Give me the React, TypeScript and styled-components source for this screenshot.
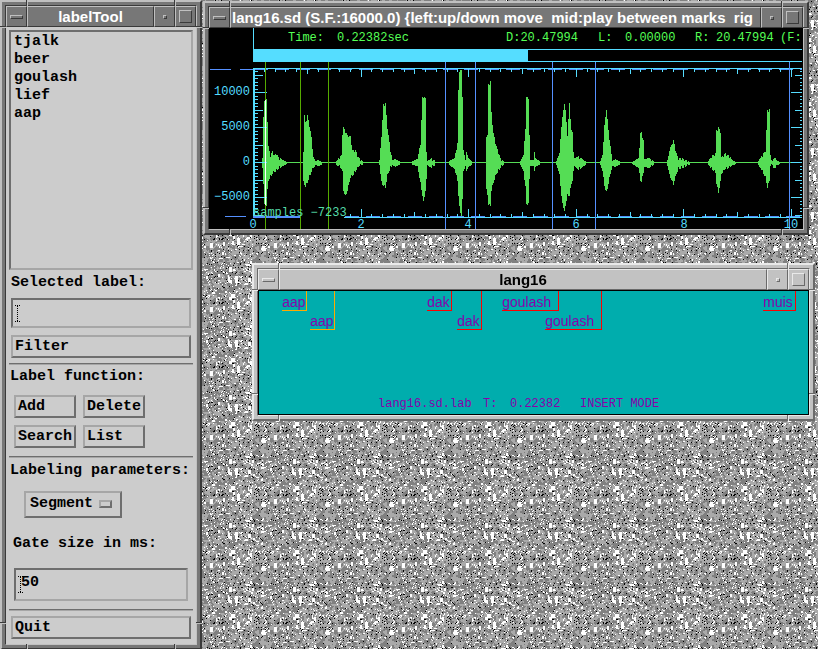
import React from "react";
import styled, { createGlobalStyle, css, ThemeProvider } from "styled-components";

const GlobalStyle = createGlobalStyle`
  *, *::before, *::after { box-sizing: border-box; }
  body { margin: 0; background: #999; overflow: hidden; }
  ul, p, h1, h2 { margin: 0; padding: 0; font: inherit; }
`;

const SANS = '"Liberation Sans", Arial, sans-serif';
const MONO = '"Liberation Mono", "Courier New", monospace';

const darkFrame = { face: "#777777", light: "#c0c0c0", dark: "#3a3a3a", title: "#ffffff" };
const lightFrame = { face: "#c2c2c2", light: "#e9e9e9", dark: "#6a6a6a", title: "#000000" };

const raised = css`
  border-style: solid;
  border-color: #a6a6a6 #6e6e6e #6e6e6e #a6a6a6;
`;
const sunken = css`
  border-style: solid;
  border-color: #6e6e6e #a6a6a6 #a6a6a6 #6e6e6e;
`;

/* ---------- desktop ---------- */

const TILE = 64;

const WHITE_BLOBS: number[][] = [
  [37, 11, 3, 5], [41, 13, 2, 2], [43, 20, 3, 7], [36, 21, 2, 5], [38, 24, 2, 3],
  [56, 22, 3, 4], [53, 27, 3, 2], [39, 38, 4, 4], [37, 41, 3, 3], [45, 46, 3, 7],
  [41, 44, 2, 3], [6, 54, 3, 5], [18, 51, 3, 5], [31, 50, 2, 4], [5, 19, 3, 2],
  [26, 18, 2, 3], [14, 20, 2, 3], [20, 36, 3, 2], [58, 41, 2, 4], [55, 45, 3, 2],
  [50, 52, 3, 1], [46, 54, 4, 1], [27, 2, 4, 1], [34, 1, 4, 1], [54, 8, 4, 2],
  [58, 5, 2, 3], [33, 35, 2, 2], [1, 15, 3, 1], [60, 12, 2, 3], [30, 60, 2, 3],
];

function buildGranite() {
  let seed = 90210;
  const rnd = () => {
    seed = (seed + 0x6d2b79f5) | 0;
    let t = Math.imul(seed ^ (seed >>> 15), 1 | seed);
    t = (t + Math.imul(t ^ (t >>> 7), 61 | t)) ^ t;
    return ((t ^ (t >>> 14)) >>> 0) / 4294967296;
  };
  const layer = () => {
    const cells = Array.from({ length: TILE * TILE }, rnd);
    return (x: number, y: number) => cells[((y + TILE) % TILE) * TILE + ((x + TILE) % TILE)];
  };
  const shade = layer();
  const fleck = layer();
  let grey = "";
  let white = "";
  let black = "";
  for (let y = 0; y < TILE; y++) {
    for (let x = 0; x < TILE; x++) {
      const cell = `M${x} ${y}h1v1h-1z`;
      let sum = 0;
      for (let dy = -1; dy <= 1; dy++) for (let dx = -1; dx <= 1; dx++) sum += shade(x + dx, y + dy);
      if (sum / 9 + (shade(x, y) - 0.5) * 0.15 > 0.5) grey += cell;
      const clump =
        fleck(x, y) * 3 + fleck(x - 1, y) * 2 + fleck(x, y - 1) * 2 + fleck(x + 1, y + 1);
      if (clump > 5.7) white += cell;
      else if (rnd() < 0.045) black += cell;
    }
  }
  WHITE_BLOBS.forEach(([x, y, w, h]) => {
    white += `M${x} ${y}h${w}v${h}h${-w}z`;
  });
  return { grey, white, black };
}

const granite = buildGranite();

const Backdrop = styled.svg`
  position: fixed;
  inset: 0;
  width: 100%;
  height: 100%;
  z-index: -1;
`;

const Desktop = styled.main`
  display: grid;
  grid-template-columns: 202px minmax(0, 1fr);
  align-items: start;
  column-gap: 1px;
  height: 100vh;
  overflow: hidden;
`;

const RightSide = styled.div`
  display: flex;
  flex-direction: column;
  gap: 28px;
  padding-top: 1px;
`;

/* ---------- window frame ---------- */

const Frame = styled.section<{ $margin?: string }>`
  position: relative;
  margin: ${(p) => p.$margin ?? "0"};
  padding: 3px;
  background: ${(p) => p.theme.face};
  border: 2px solid;
  border-color: ${({ theme: t }) => `${t.light} ${t.dark} ${t.dark} ${t.light}`};
`;

const FrameInner = styled.div`
  border: 1px solid;
  border-color: ${({ theme: t }) => `${t.dark} ${t.light} ${t.light} ${t.dark}`};
`;

const Notch = styled.i<{ $side: "top" | "bottom" | "left" | "right"; $end?: boolean }>`
  position: absolute;
  background: ${(p) => p.theme.light};
  ${({ $side, $end, theme }) =>
    $side === "top" || $side === "bottom"
      ? css`
          ${$side}: -2px;
          ${$end ? "right" : "left"}: 24px;
          width: 2px;
          height: 6px;
          border-left: 1px solid ${theme.dark};
        `
      : css`
          ${$side}: -2px;
          ${$end ? "bottom" : "top"}: 24px;
          height: 2px;
          width: 6px;
          border-top: 1px solid ${theme.dark};
        `}
`;

const TitleBar = styled.header`
  display: grid;
  grid-template-columns: 21px minmax(0, 1fr) 21px 21px;
  height: 21px;
`;

const bevel = css`
  border: 1px solid;
  border-color: ${({ theme: t }) => `${t.light} ${t.dark} ${t.dark} ${t.light}`};
`;

const TitleText = styled.h1<{ $left?: boolean }>`
  ${bevel}
  padding: 0 1px;
  overflow: hidden;
  white-space: pre;
  text-align: ${(p) => (p.$left ? "left" : "center")};
  color: ${(p) => p.theme.title};
  font: bold 15px/19px ${SANS};
`;

const FrameButton = styled.button`
  ${bevel}
  display: grid;
  place-items: center;
  padding: 0;
  background: ${(p) => p.theme.face};
`;

const Glyph = styled.span<{ $w: number; $h: number }>`
  ${bevel}
  width: ${(p) => p.$w}px;
  height: ${(p) => p.$h}px;
`;

type WindowProps = {
  title: string;
  theme: typeof darkFrame;
  margin?: string;
  alignLeft?: boolean;
  children: React.ReactNode;
};

function MotifWindow({ title, theme, margin, alignLeft, children }: WindowProps) {
  return (
    <ThemeProvider theme={theme}>
      <Frame $margin={margin} aria-label={title}>
        <FrameInner>
          <TitleBar>
            <FrameButton aria-label="Window menu"><Glyph $w={13} $h={4} /></FrameButton>
            <TitleText $left={alignLeft}>{title}</TitleText>
            <FrameButton aria-label="Minimize"><Glyph $w={4} $h={4} /></FrameButton>
            <FrameButton aria-label="Maximize"><Glyph $w={13} $h={13} /></FrameButton>
          </TitleBar>
          {children}
        </FrameInner>
        {(["top", "bottom", "left", "right"] as const).map((side) => (
          <React.Fragment key={side}>
            <Notch $side={side} />
            <Notch $side={side} $end />
          </React.Fragment>
        ))}
      </Frame>
    </ThemeProvider>
  );
}

/* ---------- labelTool ---------- */

const Panel = styled.div`
  padding: 3px 3px 5px;
  background: #cccccc;
  color: #000;
  font: bold 15px/18px ${MONO};
`;

const LabelList = styled.ul`
  ${sunken}
  border-width: 2px;
  height: 240px;
  padding: 1px 3px;
  list-style: none;
`;

const Caption = styled.label<{ $pad?: string }>`
  display: block;
  padding: ${(p) => p.$pad ?? "4px 0 0 2px"};
  white-space: nowrap;
`;

const Field = styled.div<{ $margin: string; $h: number }>`
  ${sunken}
  border-width: 2px;
  display: flex;
  align-items: center;
  height: ${(p) => p.$h}px;
  margin: ${(p) => p.$margin};
  padding: 0 2px;
`;

const FieldInput = styled.input`
  flex: 1;
  min-width: 0;
  padding: 0 0 4px;
  border: 0;
  outline: 0;
  background: transparent;
  color: #000;
  font: bold 15px/18px ${MONO};
`;

const Caret = styled.svg`
  flex: none;
  margin-right: -4px;
`;

const ToolButton = styled.button<{ $margin?: string }>`
  ${raised}
  border-width: 2px;
  display: block;
  height: 23px;
  margin: ${(p) => p.$margin ?? "0"};
  padding: 0 0 0 2px;
  background: #cccccc;
  color: #000;
  text-align: left;
  font: bold 15px/19px ${MONO};
`;

const WideButton = styled(ToolButton)`
  width: calc(100% - 4px);
`;

const Rule = styled.hr`
  height: 2px;
  margin: 0;
  border: 0;
  background: linear-gradient(#6e6e6e 50%, #a6a6a6 50%);
`;

const ButtonGrid = styled.div`
  display: grid;
  grid-template-columns: 62px 62px;
  gap: 7px;
  padding: 9px 0 8px 5px;
`;

const OptionMenu = styled.div`
  position: relative;
  width: 98px;
  height: 27px;
  margin: 11px 0 0 15px;
`;

const OptionSelect = styled.select`
  ${raised}
  border-width: 2px;
  appearance: none;
  width: 100%;
  height: 100%;
  padding: 0 0 1px 4px;
  border-radius: 0;
  background: #cccccc;
  color: #000;
  font: bold 15px/18px ${MONO};
`;

const OptionMark = styled.span`
  ${raised}
  border-width: 2px;
  position: absolute;
  right: 10px;
  top: 9px;
  width: 13px;
  height: 8px;
  pointer-events: none;
`;

function TextCaret() {
  return (
    <Caret width="7" height="17" viewBox="0 0 7 17" shapeRendering="crispEdges" aria-hidden>
      <path d="M2.5 1V16" stroke="#000" strokeDasharray="1 1" />
      <path d="M0 .5H5M0 16.5H5" stroke="#000" strokeDasharray="1 1" />
    </Caret>
  );
}

function LabelTool() {
  return (
    <MotifWindow title="labelTool" theme={darkFrame}>
      <Panel>
        <LabelList>
          {["tjalk", "beer", "goulash", "lief", "aap"].map((name) => (
            <li key={name}>{name}</li>
          ))}
        </LabelList>
        <Caption htmlFor="selected">Selected label:</Caption>
        <Field $margin="6px 2px 7px" $h={30}>
          <TextCaret />
          <FieldInput id="selected" />
        </Field>
        <WideButton $margin="0 2px 5px">Filter</WideButton>
        <Rule />
        <Caption as="h2" $pad="3px 0 0 1px">Label function:</Caption>
        <ButtonGrid>
          <ToolButton>Add</ToolButton>
          <ToolButton>Delete</ToolButton>
          <ToolButton>Search</ToolButton>
          <ToolButton>List</ToolButton>
        </ButtonGrid>
        <Rule />
        <Caption htmlFor="kind" $pad="4px 0 0 1px">Labeling parameters:</Caption>
        <OptionMenu>
          <OptionSelect id="kind" defaultValue="Segment">
            <option>Segment</option>
          </OptionSelect>
          <OptionMark />
        </OptionMenu>
        <Caption htmlFor="gate" $pad="17px 0 0 4px">Gate size in ms:</Caption>
        <Field $margin="15px 5px 8px" $h={33}>
          <TextCaret />
          <FieldInput id="gate" defaultValue="50" />
        </Field>
        <Rule />
        <WideButton $margin="5px 2px 0">Quit</WideButton>
      </Panel>
    </MotifWindow>
  );
}

/* ---------- waveform ---------- */

const CYAN = "#55ddff";
const BLUE = "#5590ff";
const WAVE = "#55dd55";
const GREEN = "#55aa00";

const WaveArea = styled.div`
  background: #000;
  font: 12px/21px ${MONO};
`;

const Readout = styled.div`
  display: grid;
  grid-template-columns: 34px 49px 169px 92px 27px 70px 21px 64px minmax(0, 1fr);
  height: 21px;
  margin-left: 44px;
  border-left: 1px solid ${CYAN};
  overflow: hidden;
  white-space: pre;
  color: #55ff55;
`;

const ViewBar = styled.div`
  height: 13px;
  margin: 0 1px 0 44px;
  border: solid ${CYAN};
  border-width: 1px 0 1px 1px;
`;

const ViewFill = styled.div`
  width: 50%;
  height: 100%;
  background: ${CYAN};
`;

const Chart = styled.svg`
  display: block;
  width: 100%;
  height: auto;
`;

// Each burst is a run of [x, top, bottom] samples of the envelope.
const bursts: number[][][] = [
  [[262,158,167],[263,117,183],[264,99,205],[266,99,205],[267,120,190],[268,146,180],[270,155,176],[272,151,173],[274,155,171],[276,153,170],[278,157,168],[281,159,166],[284,161,164],[287,162,163]],
  [[303,150,182],[304,115,184],[305,122,186],[307,115,182],[309,125,176],[311,137,171],[313,157,167],[315,161,164],[318,160,165],[322,162,163]],
  [[336,161,164],[339,157,166],[341,155,168],[342,133,172],[343,127,190],[345,131,196],[347,135,190],[350,136,177],[352,150,175],[355,150,171],[358,157,166],[363,162,163]],
  [[379,160,164],[381,135,182],[383,104,185],[385,103,187],[387,127,175],[390,150,167],[392,160,164],[395,159,166],[400,162,163]],
  [[412,161,164],[417,159,165],[420,143,183],[422,97,195],[423,96,202],[425,98,190],[426,150,180],[427,161,164],[431,158,167],[436,162,163]],
  [[449,161,164],[454,158,168],[457,143,180],[458,90,195],[459,70,207],[461,70,217],[462,95,200],[463,150,170],[465,160,165],[466,152,170],[468,158,166],[472,162,163]],
  [[486,135,190],[487,135,194],[488,84,204],[490,81,205],[491,112,190],[493,133,182],[496,146,173],[500,158,167],[504,162,163]],
  [[520,161,164],[523,155,170],[525,127,187],[526,97,203],[528,97,204],[529,135,178],[530,160,165],[533,160,165],[534,150,172],[535,158,166],[540,162,163]],
  [[556,161,164],[559,153,173],[561,125,197],[564,102,212],[565,110,205],[567,134,195],[569,103,195],[571,130,183],[572,132,180],[573,150,172],[574,158,165],[578,156,169],[582,159,166],[586,162,163]],
  [[600,161,164],[602,155,170],[604,125,185],[606,108,192],[608,130,183],[610,146,173],[612,161,165],[615,159,166],[620,162,163]],
  [[632,162,163],[638,158,167],[640,133,180],[641,132,181],[643,140,172],[644,159,166],[649,158,167],[655,162,163]],
  [[667,160,165],[670,147,177],[673,140,184],[676,153,173],[678,158,168],[682,158,167],[690,162,163]],
  [[708,161,164],[711,156,168],[715,153,172],[716,130,183],[718,127,192],[720,131,182],[721,157,173],[725,153,168],[729,156,167],[732,160,164],[736,162,163]],
  [[758,161,164],[761,156,169],[765,150,177],[767,110,187],[769,109,180],[770,155,165],[772,161,164],[774,156,169],[776,160,164],[780,162,163]],
];

// One-pixel columns give the envelope its stepped outline.
function envelope(points: number[][]) {
  let d = "";
  for (let i = 0; i < points.length - 1; i++) {
    const [x0, t0, b0] = points[i];
    const [x1, t1, b1] = points[i + 1];
    for (let x = x0; x < x1; x++) {
      const k = (x - x0) / (x1 - x0);
      const jag = (x * 7) % 3 === 0 && b0 - t0 > 8 ? 2 : 0;
      const top = Math.round(t0 + (t1 - t0) * k) + jag;
      const bottom = Math.round(b0 + (b1 - b0) * k) - jag;
      d += `M${x} ${top}h1V${bottom + 1}h-1z`;
    }
  }
  return d;
}

const waveform = bursts.map(envelope).join("");

function axisTicks() {
  let d = "";
  for (let i = 0; i <= 50; i++) {
    const x = Math.round(253 + i * 10.76);
    const len = i % 10 === 0 ? 8 : i % 5 === 0 ? 5 : 3;
    d += `M${x} 69h1v${len}h-1z`;
    if (x > 344) d += `M${x} ${217 - len}h1v${len}h-1z`;
  }
  for (let i = -15; i <= 26; i++) {
    const y = Math.round(162 - i * 3.5);
    const major = i % 10 === 0;
    const half = i % 5 === 0;
    const left = major ? 14 : half ? 10 : 5;
    const right = major ? 11 : half ? 7 : 2;
    d += `M253 ${y}h${left}v1h${-left}z`;
    d += `M802 ${y}h${-right}v1h${right}z`;
  }
  return d;
}

const ticks = axisTicks();

function WaveChart() {
  return (
    <Chart viewBox="209 62 594 167" role="img" aria-label="Waveform of lang16.sd" shapeRendering="crispEdges">
      <path d={waveform} fill={WAVE} />
      <rect x="262" y="162" width="540" height="1" fill={WAVE} />
      <path d="M210 69h21v1h-21zM240 69h13v1h-13zM225 216h21v1h-21z" fill={BLUE} />
      <path d="M254 69.5H802M345 216.5H802" stroke={BLUE} strokeDasharray="14 7" />
      <path d="M253 68h549v1h-549zM253 68h2v150h-2zM344 217h458v1h-458z" fill={CYAN} />
      <path d={ticks} fill={CYAN} />
      <path d="M253 216h48v2h-48z" fill={BLUE} />
      <rect x="265" y="62" width="1" height="167" fill={GREEN} />
      <rect x="265" y="100" width="1" height="105" fill="#fff" />
      <path d="M300 62h1v167h-1zM328 62h1v167h-1z" fill={GREEN} />
      <path d="M445 62h1v167h-1zM475 62h1v167h-1zM552 62h1v167h-1zM595 62h1v167h-1zM789 62h1v167h-1z" fill={BLUE} />
      <g fill={CYAN} fontFamily={MONO} fontSize="12">
        <g textAnchor="end">
          <text x="250" y="95">10000</text>
          <text x="250" y="130">5000</text>
          <text x="250" y="165">0</text>
          <text x="250" y="200">−5000</text>
        </g>
        <g textAnchor="middle">
          <text x="253" y="228">0</text>
          <text x="361" y="228">2</text>
          <text x="468" y="228">4</text>
          <text x="576" y="228">6</text>
          <text x="684" y="228">8</text>
          <text x="791" y="228">10</text>
        </g>
        <text x="253" y="216" fill="#55ddaa">samples −7233</text>
      </g>
    </Chart>
  );
}

function WaveWindow() {
  return (
    <MotifWindow
      title="lang16.sd (S.F.:16000.0) {left:up/down move  mid:play between marks  rig"
      theme={darkFrame}
      margin="0 9px 0 0"
      alignLeft
    >
      <WaveArea>
        <Readout>
          <span />
          <span>Time:</span>
          <span>0.22382sec</span>
          <span>D:20.47994</span>
          <span>L:</span>
          <span>0.00000</span>
          <span>R:</span>
          <span>20.47994</span>
          <span>(F:</span>
        </Readout>
        <ViewBar><ViewFill /></ViewBar>
        <WaveChart />
      </WaveArea>
    </MotifWindow>
  );
}

/* ---------- labels ---------- */

const LabelCanvas = styled.div`
  position: relative;
  display: flex;
  align-items: flex-end;
  height: 125px;
  border: 1px solid #000;
  background: #00adad;
  color: #8800aa;
`;

const Mark = styled.span<{ $x: number; $w: number; $row: number; $color: string }>`
  position: absolute;
  top: 0;
  left: ${(p) => p.$x}px;
  width: ${(p) => p.$w}px;
  padding-top: ${(p) => (p.$row ? 22 : 3)}px;
  border: solid ${(p) => p.$color};
  border-width: 0 1px 1px 0;
  font: 14px/16px ${SANS};
`;

const StatusLine = styled.p`
  display: grid;
  grid-template-columns: 105px 27px 70px auto;
  padding: 0 0 2px 119px;
  white-space: pre;
  font: 12px/16px ${MONO};
`;

const marks = [
  { text: "aap", x: 23, w: 25, row: 0, color: "#ffaa00" },
  { text: "aap", x: 51, w: 25, row: 1, color: "#ffaa00" },
  { text: "dak", x: 168, w: 25, row: 0, color: "#ff0000" },
  { text: "dak", x: 198, w: 25, row: 1, color: "#ff0000" },
  { text: "goulash", x: 243, w: 57, row: 0, color: "#ff0000" },
  { text: "goulash", x: 286, w: 57, row: 1, color: "#ff0000" },
  { text: "muis", x: 504, w: 33, row: 0, color: "#ff0000" },
];

function LabelWindow() {
  return (
    <MotifWindow title="lang16" theme={lightFrame} margin="0 3px 0 49px">
      <LabelCanvas>
        {marks.map((m) => (
          <Mark key={m.x} $x={m.x} $w={m.w} $row={m.row} $color={m.color}>{m.text}</Mark>
        ))}
        <StatusLine>
          <span>lang16.sd.lab</span>
          <span>T:</span>
          <span>0.22382</span>
          <span>INSERT MODE</span>
        </StatusLine>
      </LabelCanvas>
    </MotifWindow>
  );
}

export default function App() {
  return (
    <>
      <GlobalStyle />
      <Backdrop aria-hidden shapeRendering="crispEdges">
        <defs>
          <pattern id="granite" width={TILE} height={TILE} patternUnits="userSpaceOnUse">
            <rect width={TILE} height={TILE} fill="#aaaaaa" />
            <path d={granite.grey} fill="#808080" />
            <path d={granite.black} fill="#000" />
            <path d={granite.white} fill="#fff" />
          </pattern>
        </defs>
        <rect width="100%" height="100%" fill="url(#granite)" />
      </Backdrop>
      <Desktop>
        <LabelTool />
        <RightSide>
          <WaveWindow />
          <LabelWindow />
        </RightSide>
      </Desktop>
    </>
  );
}
